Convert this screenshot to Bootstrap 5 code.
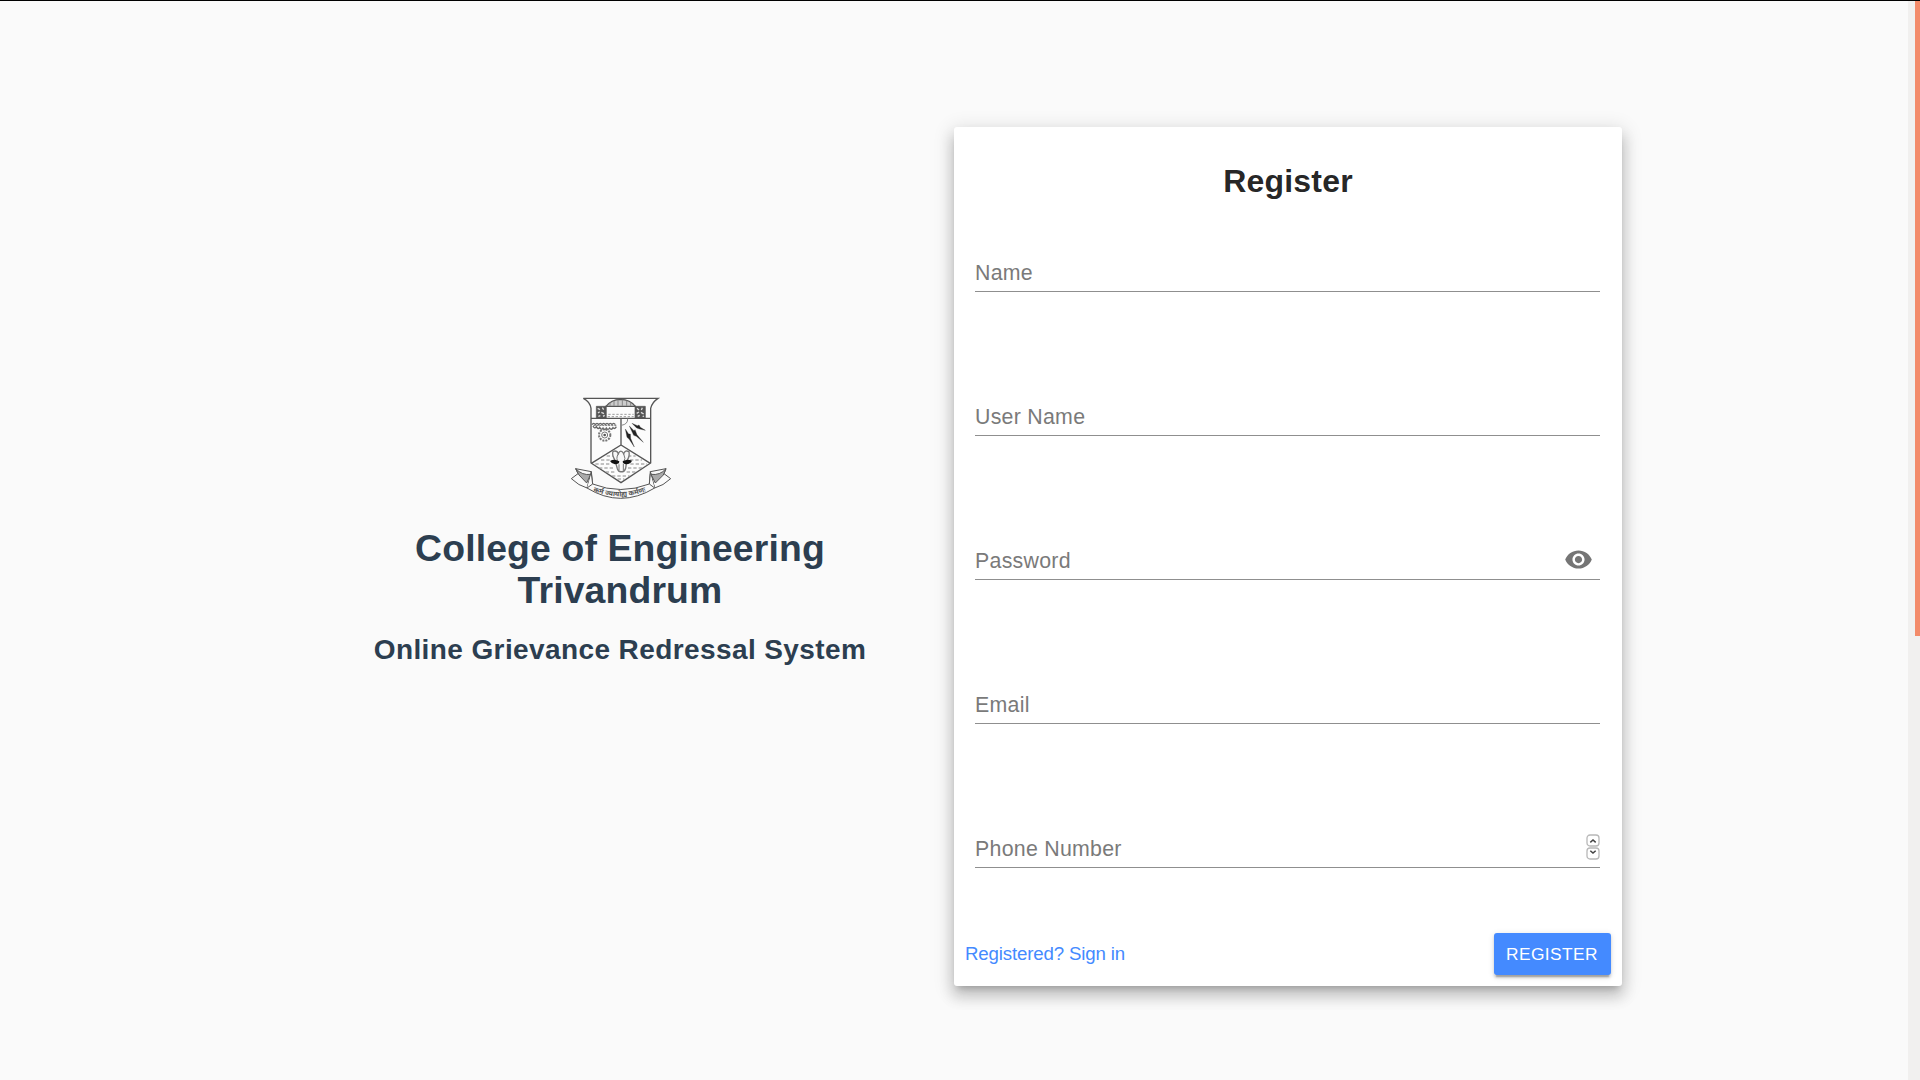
<!DOCTYPE html>
<html lang="en">
<head>
<meta charset="utf-8">
<meta name="viewport" content="width=device-width, initial-scale=1">
<title>Register - Online Grievance Redressal System</title>
<link href="https://cdn.jsdelivr.net/npm/bootstrap@5.3.0/dist/css/bootstrap.min.css" rel="stylesheet">
<style>
  body { font-family: "Liberation Sans", Arial, sans-serif; background: #fafafa; color: rgba(0,0,0,.87); height: 1080px; }
  .page-frame { border-top: 1px solid #000; }
  .page-body { padding-top: 126px; }
  .panel { width: 668px; }
  .brand { color: #2c3e50; padding-top: 258px; }
  .crest { width: 120px; height: 120px; }
  .college { font-size: 37.33px; line-height: 42px; letter-spacing: .15px; margin-top: 22px; width: 460px; }
  .system { font-size: 28px; line-height: 34px; letter-spacing: .4px; margin-top: 22px; }
  .form-card { height: 859px; border-radius: 3px; background: #fff;
    box-shadow: 0 6.7px 6.7px -4px rgba(0,0,0,.2), 0 10.7px 13.3px 1.3px rgba(0,0,0,.14), 0 4px 18.7px 2.7px rgba(0,0,0,.12); }
  .form-title { font-size: 32px; line-height: 40px; letter-spacing: .2px; margin: 34px 0 0; }
  .fields { padding: 50px 22px 0 21px; }
  .field { height: 41px; border-bottom: 1px solid #8f8f8f; margin-bottom: 103px; }
  .field input { font-size: 21.33px; letter-spacing: .27px; height: 38px; padding: 4px 0 0; outline: 0; }
  .field input::placeholder { color: #7a7a7a; opacity: 1; }
  .eye { width: 29px; height: 29px; margin: 1px 7px 0 0; fill: #757575; }
  .spinner { width: 14px; height: 26px; }
  .card-foot { padding: 0 11px; margin-top: -38px; }
  .signin { color: #448aff; font-size: 18.67px; letter-spacing: -.15px; }
  .btn-register { background: #448aff; color: #fff; width: 117px; height: 42px; padding: 2px 1px 0 0; border: 0; border-radius: 3px; font-size: 17.33px; letter-spacing: .4px;
    box-shadow: 0 4px 1.3px -2.6px rgba(0,0,0,.2), 0 2.6px 2.6px rgba(0,0,0,.14), 0 1.3px 6.6px rgba(0,0,0,.12); }
  .scroll-track { width: 12px; background: #f1f0ef; }
  .scroll-thumb { width: 5px; height: 635px; background: #f38b6a; }
</style>
<script src="https://cdn.jsdelivr.net/npm/bootstrap@5.3.0/dist/js/bootstrap.bundle.min.js"></script>
</head>
<body class="overflow-hidden">
<div class="page-frame d-flex h-100">
  <main class="page-body flex-grow-1 d-flex justify-content-center align-items-start">
    <section class="panel brand d-flex flex-column align-items-center text-center">
      <svg class="crest" viewBox="0 0 360 360" fill="none" stroke="#555" stroke-width="4">
        <defs>
          <path id="motto" d="M98 318Q182 352 268 315"/>
        </defs>
        <path d="M70 40H294Q276 52 272 70V234L183 293L93 234V70Q90 50 70 40Z" fill="#fcfcfc"/>
        <path d="M93 100H272M183 100V180M94 235L183 180L271 235"/>
        <path d="M138 64Q154 44 181 43Q211 44 226 64" fill="#ccc"/>
        <path d="M150 62V52M162 62V47M174 62V44M187 62V44M200 62V47M212 62V53" stroke="#888" stroke-width="3"/>
        <path d="M109 64H138V100H109ZM226 64H256V100H226Z" fill="#555" stroke-width="2"/>
        <path d="M113 70l7 4M127 68l4 6M114 84l5-4M124 82l8 4M115 94l6-2M129 94l5-3M231 70l6 5M247 68l-3 7M230 85l7-4M243 82l8 5M233 94l6-3M248 95l4-2" stroke="#ddd" stroke-width="4"/>
        <path d="M138 64H226V100H138Z" fill="#fcfcfc"/>
        <path d="M145 88h76M143 95h78" stroke="#999" stroke-width="3" stroke-dasharray="7 5"/>
        <!-- tree canopy and wheel -->
        <path d="M96 119q5-8 10 0q5-8 10 0q5-8 10 0q5-8 10 0q5-8 10 0q5-8 10 0q5-8 10 0M99 123q5 10 10 2q5 10 10 2q5 10 10 2q5 10 10 0q5 8 10 0q5 8 10-1q5 6 10-3" stroke="#666" stroke-width="4"/>
        <path d="M100 121h70" stroke="#888" stroke-dasharray="6 3"/>
        <circle cx="134" cy="150" r="17" stroke-width="6" stroke="#777" stroke-dasharray="6 3"/>
        <circle cx="134" cy="150" r="9" stroke-width="3" stroke="#777"/><circle cx="134" cy="150" r="2" fill="#555"/>
        <!-- sun and lightning -->
        <path d="M203 101Q204 118 184 121" stroke="#888" stroke-width="3"/>
        <g fill="#222" stroke="#333" stroke-width="1">
          <path d="M216 115L232 122L237 120L241 127L256 136L239 132L230 129Z"/>
          <path d="M208 123L222 137L225 134L231 149L250 172L229 154L221 151Z"/>
          <path d="M196 132L206 147L211 147L212 160L223 186L207 162L201 157Z"/>
        </g>
        <!-- lotus on water -->
        <path d="M140 213h87M123 225h31M210 225h36M106 237h48M211 237h50M117 249h45M204 249h47M137 261h30M200 261h32M156 273h53M173 282h20" stroke="#888" stroke-width="3" stroke-dasharray="10 6"/>
        <path d="M165 226Q155 210 159 199Q171 195 175 206Q182 191 191 206Q196 194 207 200Q210 215 200 228L197 250Q193 262 185 260Q176 262 172 251Z" stroke="#777" fill="#f8f8f8"/>
        <path d="M175 206Q166 220 176 235M191 206Q199 220 190 235M177 238V256M190 237V257" stroke="#777" stroke-width="3"/>
        <path d="M150 228Q163 220 178 229Q178 238 165 238Q154 236 150 228ZM188 229Q202 220 216 227Q212 237 199 238Q188 237 188 229Z" fill="#111" stroke="none"/>
        <!-- ribbon -->
        <g stroke-width="3" fill="#fafafa">
          <path d="M94 260L47 251L54 266L34 281Q56 302 81 309L88 294Z"/>
          <path d="M271 260L318 251L312 266L332 281Q310 302 284 309L279 294Z"/>
          <path d="M47 251Q67 272 92 268L80 294L57 270ZM318 251Q300 272 273 268L286 294L310 270Z" fill="#aaa"/>
          <path d="M94 260L81 309Q182 371 284 309L271 260L268 297Q182 330 98 297Z"/>
          <path d="M94 266L98 297L81 309M271 266L268 297L284 309"/>
        </g>
        <text font-family="Noto Sans, sans-serif" font-size="21" font-weight="700" fill="#555" stroke="none"><textPath href="#motto" startOffset="1">कर्म ज्यायोह्य कर्मणः</textPath></text>
      </svg>
      <h1 class="college fw-bold mb-0">College of Engineering Trivandrum</h1>
      <h2 class="system fw-bold mb-0 text-nowrap">Online Grievance Redressal System</h2>
    </section>
    <form class="panel form-card d-flex flex-column">
      <h2 class="form-title fw-bold text-center">Register</h2>
      <div class="fields">
        <div class="field d-flex align-items-center"><input class="border-0 bg-transparent flex-grow-1" type="text" placeholder="Name"></div>
        <div class="field d-flex align-items-center"><input class="border-0 bg-transparent flex-grow-1" type="text" placeholder="User Name"></div>
        <div class="field d-flex align-items-center"><input class="border-0 bg-transparent flex-grow-1" type="password" placeholder="Password">
          <svg class="eye" viewBox="0 0 24 24"><path d="M12 4.5C7 4.5 2.73 7.61 1 12c1.73 4.39 6 7.5 11 7.5s9.27-3.11 11-7.5c-1.73-4.39-6-7.5-11-7.5zM12 17c-2.76 0-5-2.24-5-5s2.24-5 5-5 5 2.24 5 5-2.24 5-5 5zm0-8c-1.66 0-3 1.34-3 3s1.34 3 3 3 3-1.34 3-3-1.34-3-3-3z"/></svg></div>
        <div class="field d-flex align-items-center"><input class="border-0 bg-transparent flex-grow-1" type="email" placeholder="Email"></div>
        <div class="field d-flex align-items-center"><input class="border-0 bg-transparent flex-grow-1" type="text" placeholder="Phone Number">
          <svg class="spinner" viewBox="0 0 14 26" fill="none"><rect x="1" y="1" width="12" height="11" rx="3" stroke="#b8b8b8" stroke-width="1.3"/><rect x="1" y="14" width="12" height="11" rx="3" stroke="#b8b8b8" stroke-width="1.3"/><path d="M4.3 8.4L7 6L9.7 8.4M4.3 16.7L7 19.1L9.7 16.7" stroke="#444" stroke-width="1.5"/></svg></div>
      </div>
      <div class="card-foot d-flex justify-content-between align-items-center">
        <a class="signin text-decoration-none" href="#">Registered? Sign in</a>
        <button class="btn btn-register" type="button">REGISTER</button>
      </div>
    </form>
  </main>
  <div class="scroll-track d-flex justify-content-end"><div class="scroll-thumb"></div></div>
</div>
</body>
</html>
